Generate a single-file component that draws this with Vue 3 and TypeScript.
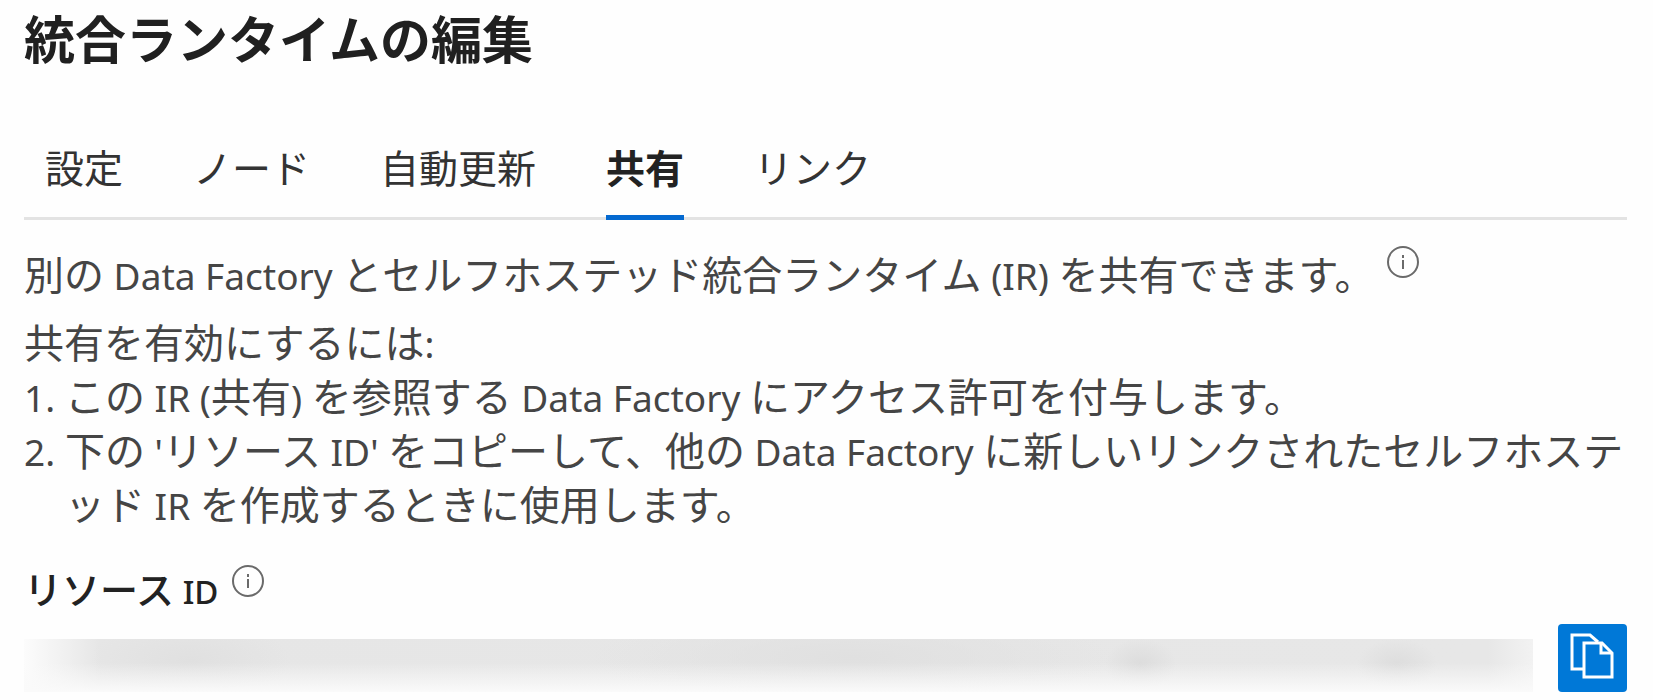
<script setup lang="ts">
import { ref } from 'vue'

interface Segment {
  text: string
  latin?: boolean
}

const tabs: string[] = ['設定', 'ノード', '自動更新', '共有', 'リンク']
const active = ref('共有')
const resourceId = ref('')

const intro: Segment[] = [
  { text: '別の' },
  { text: ' Data Factory ', latin: true },
  { text: 'とセルフホステッド統合ランタイム' },
  { text: ' (IR) ', latin: true },
  { text: 'を共有できます。' },
]

const steps: Segment[][] = [
  [
    { text: 'この' },
    { text: ' IR (', latin: true },
    { text: '共有' },
    { text: ') ', latin: true },
    { text: 'を参照する' },
    { text: ' Data Factory ', latin: true },
    { text: 'にアクセス許可を付与します。' },
  ],
  [
    { text: '下の' },
    { text: " '", latin: true },
    { text: 'リソース' },
    { text: " ID' ", latin: true },
    { text: 'をコピーして、他の' },
    { text: ' Data Factory ', latin: true },
    { text: 'に新しいリンクされたセルフホステッド' },
    { text: ' IR ', latin: true },
    { text: 'を作成するときに使用します。' },
  ],
]

function copyId() {
  navigator.clipboard?.writeText(resourceId.value)
}
</script>

<template>
  <main class="panel" lang="ja">
    <h1 class="title">統合ランタイムの編集</h1>

    <div class="tabs" role="tablist">
      <button
        v-for="tab in tabs"
        :key="tab"
        type="button"
        role="tab"
        class="tab"
        :class="{ active: tab === active }"
        :aria-selected="tab === active"
        @click="active = tab"
      >{{ tab }}</button>
    </div>

    <section class="body">
      <div class="intro">
        <p class="text"><span v-for="(s, i) in intro" :key="i" :class="{ latin: s.latin }">{{ s.text }}</span></p>
        <button type="button" class="info" aria-label="共有に関する情報">
          <svg viewBox="0 0 32 32" aria-hidden="true">
            <circle cx="16" cy="16" r="15" />
            <path d="M16 9v3M16 14v9" />
          </svg>
        </button>
      </div>

      <p class="text">共有を有効にするには<span class="latin">:</span></p>
      <ol class="steps">
        <li v-for="(step, n) in steps" :key="n" class="step">
          <span class="latin number">{{ n + 1 }}.</span>
          <span class="text"><span v-for="(s, i) in step" :key="i" :class="{ latin: s.latin }">{{ s.text }}</span></span>
        </li>
      </ol>
    </section>

    <div class="label-row">
      <label class="label" for="resource-id">リソース<span class="label-latin"> ID</span></label>
      <button type="button" class="info" aria-label="リソース ID に関する情報">
        <svg viewBox="0 0 32 32" aria-hidden="true">
          <circle cx="16" cy="16" r="15" />
          <path d="M16 9v3M16 14v9" />
        </svg>
      </button>
    </div>

    <div class="resource">
      <input id="resource-id" v-model="resourceId" class="value" type="text" readonly />
      <button type="button" class="copy" aria-label="コピー" @click="copyId">
        <svg viewBox="0 0 69 68" aria-hidden="true">
          <path d="M25 45H14V11H32L40 18" />
          <path d="M26 19H44L54 29V53H26Z" />
          <path d="M43 19V29H54" />
        </svg>
      </button>
    </div>
  </main>
</template>

<style>
body {
  background: #fefefe;
}
</style>

<style scoped>
.panel {
  padding: 0 26px 8px 24px;
  font-family: "Noto Sans CJK JP", sans-serif;
  font-size: 40px;
  line-height: 54px;
  color: #454545;
}

.title {
  margin: 0;
  padding-top: 2px;
  font-size: 51px;
  line-height: 70px;
  font-weight: 700;
  color: #202020;
}

.tabs {
  display: flex;
  gap: 70px;
  margin-top: 64px;
  padding: 0 21px;
  font-size: 39px;
  box-shadow: inset 0 -3px #e3e3e3;
}

.tab {
  padding: 6px 0 24px;
  border: 0;
  border-bottom: 5px solid transparent;
  background: none;
  font: inherit;
  line-height: 49px;
  color: #333333;
  white-space: nowrap;
  cursor: pointer;
}

.tab.active {
  border-bottom-color: #0469d0;
  font-weight: 700;
  color: #222222;
}

.body {
  padding-top: 26px;
}

.text {
  margin: 0;
  white-space: pre-wrap;
  word-break: break-all;
}

.latin {
  font-family: "Noto Sans", sans-serif;
  font-size: 37px;
  line-height: 1;
}

.intro {
  display: flex;
  align-items: flex-start;
  gap: 12px;
  margin-bottom: 14px;
}

.info {
  flex: none;
  width: 32px;
  height: 32px;
  padding: 0;
  border: 0;
  background: none;
}

.info svg,
.copy svg {
  display: block;
  width: 100%;
  height: 100%;
  fill: none;
}

.info svg {
  stroke: #6a6a6a;
  stroke-width: 2;
}

.steps {
  margin: 0;
  padding: 0;
  list-style: none;
}

.step {
  display: flex;
  align-items: baseline;
}

.number {
  flex: none;
  width: 41px;
}

.label-row {
  display: flex;
  align-items: flex-start;
  gap: 13px;
  margin-top: 27px;
  padding-top: 8px;
}

.label {
  font-size: 38px;
  line-height: 46px;
  font-weight: 500;
  color: #222222;
  white-space: pre;
}

.label-latin {
  font-family: "Noto Sans", sans-serif;
  font-size: 33px;
  line-height: 1;
}

.resource {
  display: flex;
  align-items: flex-end;
  gap: 25px;
  margin-top: 13px;
}

.value {
  flex: 1;
  min-width: 0;
  height: 53px;
  padding: 0;
  border: 0;
  outline: 0;
  background:
    linear-gradient(to bottom, transparent 45%, #fafafa),
    radial-gradient(ellipse 36px 26px at 74% 48%, #dcdcdc, transparent),
    radial-gradient(ellipse 40px 26px at 91% 48%, #dddddd, transparent),
    radial-gradient(ellipse 100px 40px at 11% 40%, #e0e0e0, transparent),
    radial-gradient(ellipse 260px 50px at 55% 35%, #e0e0e0, transparent),
    linear-gradient(to right, #fcfcfc, #e6e6e6 5%, #e7e7e7 97%, #f2f2f2);
}

.copy {
  flex: none;
  width: 69px;
  height: 68px;
  padding: 0;
  border: 0;
  border-radius: 4px;
  background: #0078d7;
  cursor: pointer;
}

.copy svg {
  stroke: #ffffff;
  stroke-width: 3;
}
</style>
